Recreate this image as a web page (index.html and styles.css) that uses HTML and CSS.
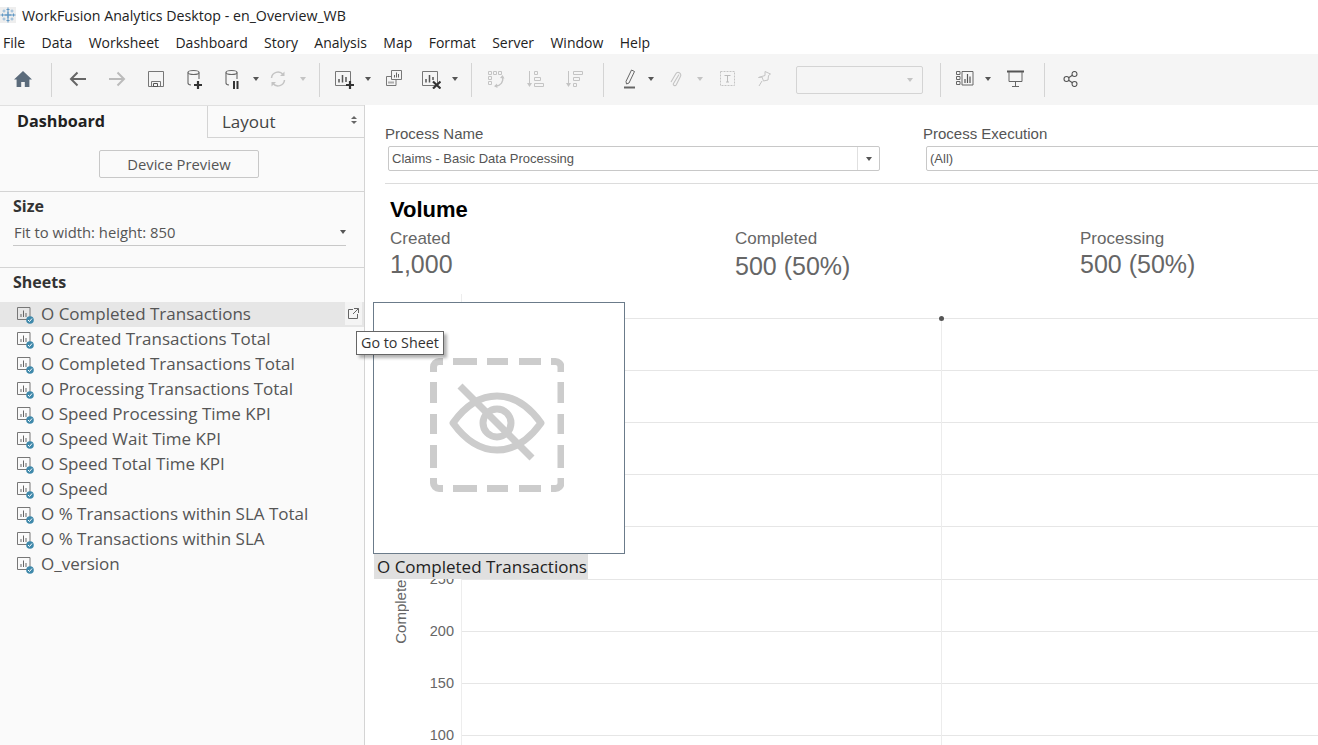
FILE: index.html
```html
<!DOCTYPE html>
<html lang="en">
<head>
    <meta charset="UTF-8">
    <meta name="viewport" content="width=device-width, initial-scale=1.0">
    <title>WorkFusion Analytics Desktop - en_Overview_WB</title>
    <link rel="stylesheet" href="styles.css">
</head>
<body>
    <div class="title-bar">
        <svg class="app-logo" width="16" height="16" viewBox="0 0 16 16">
            <rect x="0" y="0" width="16" height="16" fill="#eeeeee"/>
            <g fill="none" stroke="#5f97c4">
                <path d="M8 4.500v7M4.500 8h7" stroke-width="1.500"/>
                <path d="M8 .500v4M6.500 2.500h3M8 11.500v4M6.500 13.500h3M.5 8h4M2.500 6.500v3M11.500 8h4M13.500 6.500v3" stroke-width="1"/>
                <path d="M2.500 4h3M4 2.500v3M10.500 4h3M12 2.500v3M2.500 12h3M4 10.500v3M10.500 12h3M12 10.500v3" stroke="#8fb6d6" stroke-width="1"/>
            </g>
        </svg>
        <span>WorkFusion Analytics Desktop - en_Overview_WB</span>
    </div>

    <div class="menu-bar">
        <span>File</span><span>Data</span><span>Worksheet</span><span>Dashboard</span><span>Story</span><span>Analysis</span><span>Map</span><span>Format</span><span>Server</span><span>Window</span><span>Help</span>
    </div>

    <div class="toolbar">
        <div class="tool w38">
            <svg width="20" height="18" viewBox="0 0 20 18"><path d="M10 1L1 9.5h2.6V17h4.6v-5h3.6v5h4.6V9.5H19z" fill="#5b6b7b"/></svg>
        </div>
        <div class="tool-sep sep-a"></div>
        <div class="tool w39">
            <svg width="20" height="18" viewBox="0 0 20 18"><path d="M18 9H3M9.5 2.500L3 9l6.500 6.500" fill="none" stroke="#666" stroke-width="2"/></svg>
        </div>
        <div class="tool w39">
            <svg width="20" height="18" viewBox="0 0 20 18"><path d="M2 9h15M10.500 2.500L17 9l-6.500 6.500" fill="none" stroke="#bbb" stroke-width="2"/></svg>
        </div>
        <div class="tool w39">
            <svg width="18" height="18" viewBox="0 0 18 18"><path d="M1.500 1.500h15v15h-15zM4.500 16.500v-5h9v5" fill="none" stroke="#777"/><path d="M6.500 13.500h4v3h-4z" fill="none" stroke="#555"/></svg>
        </div>
        <div class="tool w39">
            <svg width="18" height="20" viewBox="0 0 18 20"><g fill="none" stroke="#666" stroke-width="1.100"><ellipse cx="7.500" cy="3.500" rx="5.500" ry="2"/><path d="M2 3.500V14c0 1 1 1.800 3 2M13 3.500V10"/></g><path d="M8 16h8M12 12v8" stroke="#333" stroke-width="2.200"/></svg>
        </div>
        <div class="tool w36">
            <svg width="18" height="20" viewBox="0 0 18 20"><g fill="none" stroke="#666" stroke-width="1.100"><ellipse cx="8.500" cy="3.500" rx="5.500" ry="2"/><path d="M3 3.500V14c0 1 1 1.800 3 2M14 3.500V10"/></g><path d="M11 12v8M14.500 12v8" stroke="#333" stroke-width="2"/></svg>
        </div>
        <div class="tool w11"><span class="caret"></span></div>
        <div class="tool w34">
            <svg width="18" height="18" viewBox="0 0 18 18"><g fill="none" stroke="#c4c4c4" stroke-width="1.500"><path d="M2.500 8a6.500 6.500 0 0 1 11.500-3.500M15.500 10a6.500 6.500 0 0 1-11.500 3.500"/></g><path d="M15.500 1.500v4.500H11zM2.500 16.500V12H7z" fill="#c4c4c4"/></svg>
        </div>
        <div class="tool w16"><span class="caret caret-off"></span></div>
        <div class="tool-sep sep-b"></div>
        <div class="tool w36">
            <svg width="20" height="20" viewBox="0 0 20 20"><path d="M1.500 2.500h15v14h-15z" fill="none" stroke="#777"/><path d="M5 13.500V10M8.500 13.500V6M12 13V8" stroke="#555" stroke-width="1.500"/><path d="M12 16h8M16 12v8" stroke="#333" stroke-width="2.200"/></svg>
        </div>
        <div class="tool w12"><span class="caret"></span></div>
        <div class="tool w38">
            <svg width="18" height="18" viewBox="0 0 18 18"><path d="M7.500 6.500h-5v9H12V9.500" fill="none" stroke="#777"/><path d="M7.500 .5h10v9h-10z" fill="none" stroke="#777"/><path d="M10.500 7.500V5M12.500 7.500V2.500M14.500 7.500V4M5 13.500v-2M7 13.500v-2M9 13.500v-2" stroke="#666"/></svg>
        </div>
        <div class="tool w38">
            <svg width="20" height="20" viewBox="0 0 20 20"><path d="M1.500 2.500h15v14h-15z" fill="none" stroke="#777"/><path d="M5 13.500V10M8.500 13.500V6M12 11V8" stroke="#555" stroke-width="1.500"/><path d="M12 12.500l7.500 7M19.500 12.500l-7.500 7" stroke="#333" stroke-width="2.200"/></svg>
        </div>
        <div class="tool w10"><span class="caret"></span></div>
        <div class="tool-sep sep-c"></div>
        <div class="tool w38">
            <svg width="18" height="18" viewBox="0 0 18 18"><g fill="none" stroke="#c4c4c4"><path d="M1.500 1.500h3v3h-3zM6.500 1.500h3v3h-3zM11.500 1.500h3v3h-3zM1.500 6.500h3v3h-3zM1.500 11.500h3v3h-3z"/><path d="M15.500 7a7 7 0 0 1-7 9" stroke-width="1.300"/></g><path d="M13 8l2.500-3 2 3.500zM10 13.500l-3 2.800 3.500 1.700z" fill="#c4c4c4"/></svg>
        </div>
        <div class="tool w39">
            <svg width="18" height="18" viewBox="0 0 18 18"><g fill="none" stroke="#c4c4c4"><path d="M8.500 1.500h3v3h-3zM8.500 7.500h6v3h-6zM8.500 13.500h9v3h-9z"/><path d="M3.500 1v14"/></g><path d="M1 13h5l-2.500 4z" fill="#c4c4c4"/></svg>
        </div>
        <div class="tool w39">
            <svg width="18" height="18" viewBox="0 0 18 18"><g fill="none" stroke="#c4c4c4"><path d="M8.500 1.500h9v3h-9zM8.500 7.500h6v3h-6zM8.500 13.500h3v3h-3z"/><path d="M3.500 1v14"/></g><path d="M1 13h5l-2.500 4z" fill="#c4c4c4"/></svg>
        </div>
        <div class="tool-sep sep-d"></div>
        <div class="tool w34">
            <svg width="14" height="20" viewBox="0 0 14 20"><path d="M8.500 1l3 1.500L6 14l-2.500 1-.5-2.600z" fill="none" stroke="#666"/><path d="M1 18.500h11" stroke="#666" stroke-width="2"/></svg>
        </div>
        <div class="tool w8"><span class="caret"></span></div>
        <div class="tool w42">
            <svg width="12" height="18" viewBox="0 0 12 18"><path d="M9.500 5L4 14c-1 1.800 1.800 3 2.800 1.200l4-8c1.800-3.500-2.800-6-4.600-2.800L1.500 12.500" fill="none" stroke="#c4c4c4" stroke-width="1.100" transform="translate(-.5 -.5)"/></svg>
        </div>
        <div class="tool w6"><span class="caret caret-off"></span></div>
        <div class="tool w48">
            <svg width="15" height="15" viewBox="0 0 15 15"><path d="M.5.500h14v14H.500z" fill="none" stroke="#c4c4c4" stroke-dasharray="2 1"/><path d="M4.500 4.500h6M7.500 4.500v6.500M6 11h3" fill="none" stroke="#bbb"/></svg>
        </div>
        <div class="tool w26">
            <svg width="14" height="16" viewBox="0 0 14 16"><path d="M8 .5l5.500 2.500-2 1.500-.5 4.500-4.500 1L5 6 1.500 6.500 8 4.500zM5 10L2 15" fill="none" stroke="#c4c4c4"/></svg>
        </div>
        <div class="tool-select"><span class="caret caret-off"></span></div>
        <div class="tool-sep sep-e"></div>
        <div class="tool w36">
            <svg width="20" height="15" viewBox="0 0 20 15"><g fill="none" stroke="#666"><path d="M.500 .500h3.500v3H.500zM.500 5.500h3.500v3H.500zM.500 10.500h3.500v3H.500zM6 .500h11v13.500H6z"/></g><path d="M9 12V8M11.500 12V3M14 12V5.500" stroke="#555" stroke-width="1.200"/></svg>
        </div>
        <div class="tool w8"><span class="caret"></span></div>
        <div class="tool w48">
            <svg width="18" height="18" viewBox="0 0 18 18"><path d="M0 1.500h17" stroke="#555" stroke-width="2"/><path d="M2 2v9.500h13V2M8.500 11.500V16M5 16.500h7" fill="none" stroke="#666"/></svg>
        </div>
        <div class="tool-sep sep-f"></div>
        <div class="tool w42">
            <svg width="16" height="16" viewBox="0 0 16 16"><g fill="none" stroke="#555" stroke-width="1.100"><circle cx="3.500" cy="8" r="2.500"/><circle cx="11.500" cy="3" r="2.500"/><circle cx="11.500" cy="13" r="2.500"/><path d="M5.600 6.700L9.400 4.300M5.600 9.300l3.800 2.400"/></g></svg>
        </div>
    </div>

    <div class="workspace">
        <aside class="sidebar">
            <div class="tabs">
                <div class="tab tab-active">Dashboard</div>
                <div class="tab tab-other">
                    <span>Layout</span>
                    <span class="updown"><i></i><i></i></span>
                </div>
            </div>
            <div class="preview-wrap">
                <button class="preview-btn">Device Preview</button>
            </div>
            <div class="size-section">
                <h3>Size</h3>
                <div class="size-select">
                    <span>Fit to width: height: 850</span>
                    <span class="caret"></span>
                </div>
            </div>
            <div class="sheets-section">
                <h3>Sheets</h3>
                <ul id="sheetList" class="sheet-list"></ul>
            </div>
        </aside>

        <main class="dashboard">
            <div class="filters">
                <div class="filter filter-name">
                    <label>Process Name</label>
                    <div class="combo">
                        <span class="combo-text">Claims - Basic Data Processing</span>
                        <span class="combo-arrow"><span class="caret"></span></span>
                    </div>
                </div>
                <div class="filter filter-exec">
                    <label>Process Execution</label>
                    <div class="combo combo-open">
                        <span class="combo-text">(All)</span>
                    </div>
                </div>
            </div>

            <section class="volume">
                <h2>Volume</h2>
                <div class="kpis">
                    <div class="kpi kpi-created">
                        <div class="kpi-label">Created</div>
                        <div class="kpi-value">1,000</div>
                    </div>
                    <div class="kpi kpi-completed">
                        <div class="kpi-label">Completed</div>
                        <div class="kpi-value">500 (50%)</div>
                    </div>
                    <div class="kpi kpi-processing">
                        <div class="kpi-label">Processing</div>
                        <div class="kpi-value">500 (50%)</div>
                    </div>
                </div>
            </section>

            <section class="chart">
                <div class="axis-title">Completed Transactions</div>
                <div class="axis-ticks">
                    <div class="tick">500</div>
                    <div class="tick">450</div>
                    <div class="tick">400</div>
                    <div class="tick">350</div>
                    <div class="tick tick-wide">300</div>
                    <div class="tick">250</div>
                    <div class="tick">200</div>
                    <div class="tick">150</div>
                    <div class="tick">100</div>
                </div>
                <div class="plot">
                    <div class="gridline"></div>
                    <div class="gridline"></div>
                    <div class="gridline"></div>
                    <div class="gridline"></div>
                    <div class="gridline gridline-wide"></div>
                    <div class="gridline"></div>
                    <div class="gridline"></div>
                    <div class="gridline"></div>
                    <div class="gridline"></div>
                    <span class="split-line"></span>
                    <span class="mark"></span>
                </div>
            </section>
        </main>

        <!-- sheet being dragged from the list, lies over everything -->
        <div class="drag-card">
            <svg width="134" height="134" viewBox="0 0 134 134">
                <g fill="none" stroke="#cccccc" stroke-width="7">
                    <path d="M3.500 14V9a5.500 5.500 0 0 1 5.500-5.500H13"/>
                    <path d="M121 3.500h4.500a5.500 5.500 0 0 1 5.500 5.500V14"/>
                    <path d="M3.500 120v5a5.500 5.500 0 0 0 5.500 5.500H13"/>
                    <path d="M121 130.500h4.500a5.500 5.500 0 0 0 5.500-5.500V120"/>
                    <path d="M23 3.500h24M57 3.500h21M89 3.500h22M23 130.500h24M57 130.500h21M89 130.500h22"/>
                    <path d="M3.500 24v21M3.500 56v20M3.500 87v23M131 24v21M131 56v20M131 87v23"/>
                    <path d="M23 65C36 47 50 38 67 38C84 38 98 47 111 65C98 83 84 92 67 92C50 92 36 83 23 65Z" stroke-linejoin="round"/>
                    <circle cx="67" cy="65" r="14"/>
                    <path d="M30 28L102 100"/>
                </g>
            </svg>
        </div>
        <div class="drag-label">O Completed Transactions</div>
        <div class="goto-btn">
            <svg width="11" height="11" viewBox="0 0 11 11"><path d="M5 1.500H.5v9h9V6M6 .5h4.500V5M10.500 .5L5 6" fill="none" stroke="#666"/></svg>
        </div>
        <div class="tooltip">Go to Sheet</div>
    </div>

    <script>
        const sheets = [
            'O Completed Transactions',
            'O Created Transactions Total',
            'O Completed Transactions Total',
            'O Processing Transactions Total',
            'O Speed Processing Time KPI',
            'O Speed Wait Time KPI',
            'O Speed Total Time KPI',
            'O Speed',
            'O % Transactions within SLA Total',
            'O % Transactions within SLA',
            'O_version'
        ];

        const sheetIcon = `
            <svg class="sheet-icon" width="18" height="18" viewBox="0 0 18 18">
                <path d="M.5 1.500h12.500v12H.5z" fill="none" stroke="#777"/>
                <path d="M4 11V8M6.500 11V4.500M9 11V7" stroke="#666"/>
                <circle cx="13" cy="14" r="3.800" fill="#3f89ab"/>
                <path d="M11 14l1.500 1.500 2.500-3" fill="none" stroke="#fff"/>
            </svg>`;

        const list = document.getElementById('sheetList');
        sheets.forEach((name, i) => {
            const li = document.createElement('li');
            li.className = i === 0 ? 'sheet sheet-hover' : 'sheet';
            li.innerHTML = `${sheetIcon}<span>${name}</span>`;
            list.appendChild(li);
        });
    </script>
</body>
</html>
```

FILE: styles.css
```css
* { margin: 0; padding: 0; box-sizing: border-box; }
html, body { height: 100%; overflow: hidden; }
body { font-family: "Open Sans", sans-serif; background: white; color: #333; }

.title-bar { height: 30px; display: flex; align-items: center; gap: 6px; font-size: 14.2px; color: #222; }
.app-logo { flex: none; }
.menu-bar { height: 24px; display: flex; align-items: center; gap: 16.4px; padding-left: 3px; font-size: 14px; color: #222; }

.toolbar { height: 51px; background: #f5f5f5; display: flex; align-items: center; padding-left: 4px; }
.tool { height: 24px; flex: none; display: flex; align-items: center; justify-content: center; margin-bottom: 2px; }
.w6 { width: 6px; } .w8 { width: 8px; } .w10 { width: 10px; } .w11 { width: 11px; } .w12 { width: 12px; }
.w16 { width: 16px; } .w26 { width: 26px; } .w34 { width: 34px; } .w36 { width: 36px; } .w38 { width: 38px; }
.w39 { width: 39px; } .w42 { width: 42px; } .w48 { width: 48px; }
.tool-sep { width: 1px; height: 34px; background: #d4d4d4; flex: none; }
.sep-a { margin: 0 6px 0 9px; }
.sep-b { margin: 0 6px 0 8px; }
.sep-c { margin: 0 5px 0 11px; }
.sep-d { margin: 0 9px 0 10px; }
.sep-e { margin: 0 7px 0 17px; }
.sep-f { margin: 0 5px 0 4px; }
.tool-select { width: 127px; height: 28px; margin-left: 19px; border: 1px solid #d4d4d4; border-radius: 2px; display: flex; align-items: center; justify-content: flex-end; padding-right: 9px; flex: none; }
.caret { display: inline-block; width: 0; height: 0; border-left: 3.5px solid transparent; border-right: 3.5px solid transparent; border-top: 4px solid #555; }
.caret-off { border-top-color: #c4c4c4; }

.workspace { position: relative; height: 640px; display: flex; }

.sidebar { width: 365px; flex: none; background: #fafafa; border-right: 1px solid #d4d4d4; }
.tabs { display: flex; height: 33px; border-top: 1px solid #e0e0e0; }
.tab-active { width: 207px; padding: 4px 0 0 17px; font-size: 16.2px; font-weight: 700; color: #222; }
.tab-other { flex: 1; display: flex; justify-content: space-between; padding: 4px 7px 0 14px; background: #fafafa; border-left: 1px solid #d4d4d4; border-bottom: 1px solid #d4d4d4; color: #444; font-size: 17px; }
.updown { display: flex; flex-direction: column; gap: 2px; padding-top: 6px; }
.updown i { display: block; width: 0; height: 0; border-left: 3px solid transparent; border-right: 3px solid transparent; }
.updown i:first-child { border-bottom: 3px solid #666; }
.updown i:last-child { border-top: 3px solid #666; }

.preview-wrap { height: 54px; border-bottom: 1px solid #d4d4d4; padding: 12px 0 0 99px; }
.preview-btn { width: 160px; height: 28px; background: #fafafa; border: 1px solid #c8c8c8; border-radius: 2px; font-family: "Open Sans", sans-serif; font-size: 14.8px; color: #555; }

.sidebar h3 { font-size: 16px; font-weight: 700; color: #333; }
.size-section { height: 76px; border-bottom: 1px solid #d4d4d4; padding: 3px 18px 0 13px; }
.size-select { height: 27px; margin-top: 2px; border-bottom: 1px solid #c8c8c8; display: flex; align-items: center; justify-content: space-between; padding: 0 0 0 1px; font-size: 14.8px; color: #555; }
.sheets-section { padding-top: 3px; }
.sheets-section h3 { padding-left: 13px; height: 31px; }

.sheet-list { list-style: none; }
.sheet { height: 25px; display: flex; align-items: center; gap: 6px; padding: 0 0 2px 17px; font-size: 17px; color: #555; }
.sheet-hover { background: #e6e6e6; }
.sheet-icon { flex: none; margin-top: 2px; }

.dashboard { flex: 1; min-width: 0; padding-left: 20px; font-family: "Liberation Sans", Arial, sans-serif; }
.filters { height: 79px; display: flex; padding-top: 20px; border-bottom: 1px solid #dcdcdc; }
.filter label { display: block; font-size: 15px; color: #555; line-height: 18px; }
.filter-name { width: 538px; }
.filter-exec { flex: 1; overflow: hidden; }
.combo { height: 25px; margin-top: 3px; border: 1px solid #c8c8c8; border-radius: 2px; display: flex; align-items: center; font-size: 13px; color: #555; }
.filter-name .combo { margin-left: 3px; width: 492px; }
.filter-exec .combo { margin-left: 3px; width: 420px; }
.combo-text { flex: 1; padding-left: 3px; }
.combo-arrow { width: 22px; height: 100%; border-left: 1px solid #e0e0e0; display: flex; align-items: center; justify-content: center; }

.volume { padding: 13px 0 0 5px; }
.volume h2 { font-size: 22px; line-height: 26px; color: #000; }
.kpis { display: flex; }
.kpi { color: #666; }
.kpi-created { width: 345px; }
.kpi-completed { width: 345px; }
.kpi-label { font-size: 17px; line-height: 20px; margin-top: 6px; }
.kpi-value { font-size: 25px; line-height: 31px; }
.kpi-completed .kpi-value { margin: 2px 0 0 0; }

.chart { height: 453px; margin-left: -20px; display: flex; margin-top: 12px; overflow: hidden; padding-left: 27px; }
.axis-title { width: 17px; align-self: flex-end; margin-bottom: 103px; writing-mode: vertical-rl; transform: rotate(180deg); font-size: 15px; color: #666; white-space: nowrap; line-height: 17px; }
.axis-ticks { width: 52px; padding: 16px 7px 0 0; }
.tick { height: 52px; font-size: 14.5px; line-height: 17px; text-align: right; color: #666; }
.tick-wide { height: 53px; }
.plot { flex: 1; position: relative; padding-top: 24px; border-left: 1px solid #ededed; }
.gridline { height: 52px; border-top: 1px solid #e6e6e6; }
.gridline-wide { height: 53px; }
.split-line { position: absolute; left: 479px; top: 24px; bottom: 0; width: 1px; background: #ececec; }
.mark { position: absolute; left: 477px; top: 22px; width: 5px; height: 5px; border-radius: 50%; background: #555; }

.drag-card { position: absolute; left: 373px; top: 197px; width: 252px; height: 252px; background: white; border: 1px solid #6b7b8a; display: flex; padding: 55px 0 0 56px; }
.drag-label { position: absolute; left: 374px; top: 449px; width: 214px; height: 25px; background: #e0e0e0; padding-left: 3px; font-size: 17px; line-height: 25px; color: #222; white-space: nowrap; }
.goto-btn { position: absolute; left: 345px; top: 197px; width: 17px; height: 23px; background: #f4f4f4; display: flex; align-items: center; justify-content: center; }
.tooltip { position: absolute; left: 356px; top: 226px; width: 88px; height: 24px; background: white; border: 1px solid #666; box-shadow: 3px 3px 3px rgba(0,0,0,0.3); font-size: 14.3px; line-height: 22px; padding-left: 4px; color: #333; white-space: nowrap; }
```
